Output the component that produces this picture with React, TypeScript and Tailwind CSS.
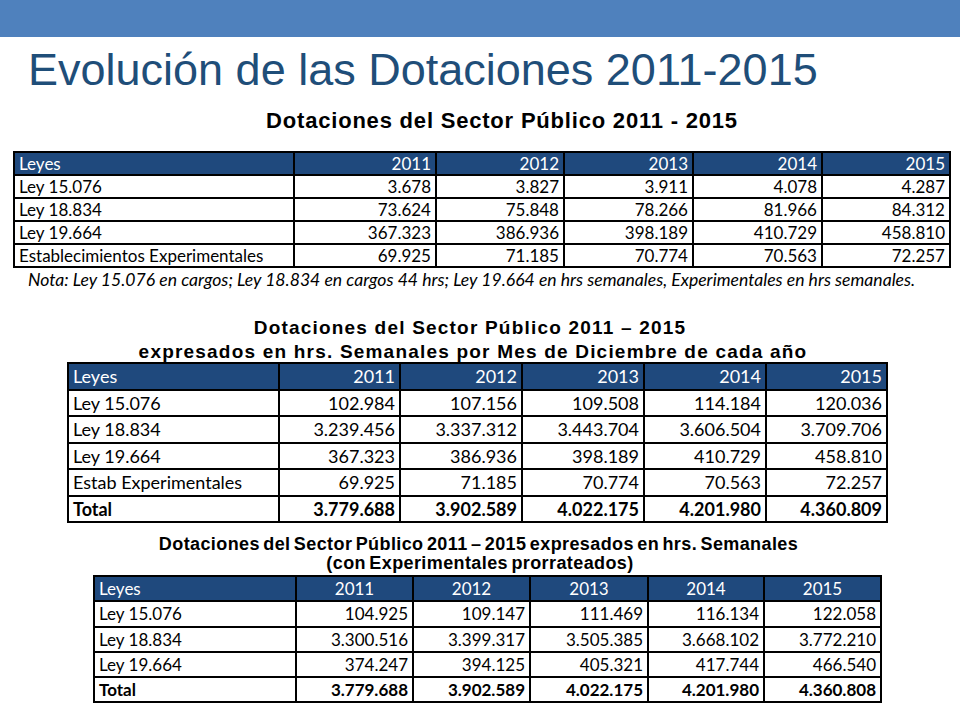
import React from 'react';

type TableProps = {
  widths: number[];
  header: string[];
  rows: string[][];
  total?: string[];
  textClass: string;
  rowClass: string;
  headCenter?: boolean;
};

const years = ['2011', '2012', '2013', '2014', '2015'];

const DataTable: React.FC<TableProps> = ({ widths, header, rows, total, textClass, rowClass, headCenter }) => {
  const tableWidth = widths.reduce((a, b) => a + b, 0);
  return (
    <table
      className={`table-fixed border-collapse border-2 border-black text-black ${textClass}`}
      style={{ width: tableWidth }}
    >
      <colgroup>
        {widths.map((w, i) => (
          <col key={i} style={{ width: w }} />
        ))}
      </colgroup>
      <thead>
        <tr className={rowClass}>
          {header.map((h, i) => (
            <th
              key={h}
              className={`bg-[#1f497d] font-normal text-white border-2 border-black px-[4px] py-0 leading-none ${
                i === 0 ? 'text-left' : headCenter ? 'text-center' : 'text-right'
              }`}
            >
              {h}
            </th>
          ))}
        </tr>
      </thead>
      <tbody>
        {rows.map((r) => (
          <tr key={r[0]} className={rowClass}>
            {r.map((c, i) => (
              <td
                key={i}
                className={`border-2 border-black px-[4px] py-0 leading-none whitespace-nowrap ${i === 0 ? 'text-left' : 'text-right'}`}
              >
                {c}
              </td>
            ))}
          </tr>
        ))}
        {total && (
          <tr className={rowClass}>
            {total.map((c, i) => (
              <td
                key={i}
                className={`border-2 border-black px-[4px] py-0 leading-none font-bold ${i === 0 ? 'text-left' : 'text-right'}`}
              >
                {c}
              </td>
            ))}
          </tr>
        )}
      </tbody>
    </table>
  );
};

export default function App() {
  return (
    <div className="w-[960px] h-[720px] bg-white overflow-hidden flex flex-col font-['Liberation_Sans',Arial,sans-serif]">
      <div className="h-[37px] w-full bg-[#4f81bd] shrink-0" />

      <h1 className="mt-[10px] ml-[28px] text-[45px] leading-[45px] text-[#1f4e79] font-normal whitespace-nowrap">
        Evolución de las Dotaciones 2011-2015
      </h1>

      <div className="mt-[18px] h-[22px] w-full flex justify-center pl-[44px]">
        <p className="text-[22px] leading-[22px] font-bold tracking-[0.8px] text-black whitespace-nowrap">
          Dotaciones del Sector Público 2011 - 2015
        </p>
      </div>

      <div className="mt-[19px] ml-[13px] font-['Lato',sans-serif]">
        <DataTable
          widths={[280, 142, 128, 129, 129, 128]}
          header={['Leyes', ...years]}
          rows={[
            ['Ley 15.076', '3.678', '3.827', '3.911', '4.078', '4.287'],
            ['Ley 18.834', '73.624', '75.848', '78.266', '81.966', '84.312'],
            ['Ley 19.664', '367.323', '386.936', '398.189', '410.729', '458.810'],
            ['Establecimientos Experimentales', '69.925', '71.185', '70.774', '70.563', '72.257'],
          ]}
          textClass="text-[17px]"
          rowClass="h-[23px]"
        />
      </div>

      <p className="mt-[2px] ml-[28px] font-['Lato',sans-serif] italic text-[17.6px] leading-[20px] text-black whitespace-nowrap">
        Nota: Ley 15.076 en cargos; Ley 18.834 en cargos 44 hrs; Ley 19.664 en hrs semanales, Experimentales en hrs semanales.
      </p>

      <div className="mt-[26px] flex flex-col items-center pr-[20px] text-[19px] leading-[24px] font-bold tracking-[1.2px] text-black whitespace-nowrap">
        <p>Dotaciones del Sector Público 2011 – 2015</p>
        <p className="pl-[6px]">expresados en hrs. Semanales por Mes de Diciembre de cada año</p>
      </div>

      <div className="mt-[-2px] ml-[67px] font-['Lato',sans-serif]">
        <DataTable
          widths={[211, 121, 122, 122, 122, 121]}
          header={['Leyes', ...years]}
          rows={[
            ['Ley 15.076', '102.984', '107.156', '109.508', '114.184', '120.036'],
            ['Ley 18.834', '3.239.456', '3.337.312', '3.443.704', '3.606.504', '3.709.706'],
            ['Ley 19.664', '367.323', '386.936', '398.189', '410.729', '458.810'],
            ['Estab Experimentales', '69.925', '71.185', '70.774', '70.563', '72.257'],
          ]}
          total={['Total', '3.779.688', '3.902.589', '4.022.175', '4.201.980', '4.360.809']}
          textClass="text-[18px]"
          rowClass="h-[26.5px]"
        />
      </div>

      <div className="mt-[12px] flex flex-col items-center pr-[3px] text-[18px] leading-[19px] font-bold tracking-[0.4px] [word-spacing:-2px] text-black whitespace-nowrap">
        <p>Dotaciones del Sector Público 2011 – 2015 expresados en hrs. Semanales</p>
        <p className="pl-[3px]">(con Experimentales prorrateados)</p>
      </div>

      <div className="mt-[2px] ml-[93px] font-['Lato',sans-serif]">
        <DataTable
          widths={[202, 117, 117, 118, 116, 117]}
          header={['Leyes', ...years]}
          rows={[
            ['Ley 15.076', '104.925', '109.147', '111.469', '116.134', '122.058'],
            ['Ley 18.834', '3.300.516', '3.399.317', '3.505.385', '3.668.102', '3.772.210'],
            ['Ley 19.664', '374.247', '394.125', '405.321', '417.744', '466.540'],
          ]}
          total={['Total', '3.779.688', '3.902.589', '4.022.175', '4.201.980', '4.360.808']}
          textClass="text-[17px]"
          rowClass="h-[25.3px]"
          headCenter
        />
      </div>
    </div>
  );
}
